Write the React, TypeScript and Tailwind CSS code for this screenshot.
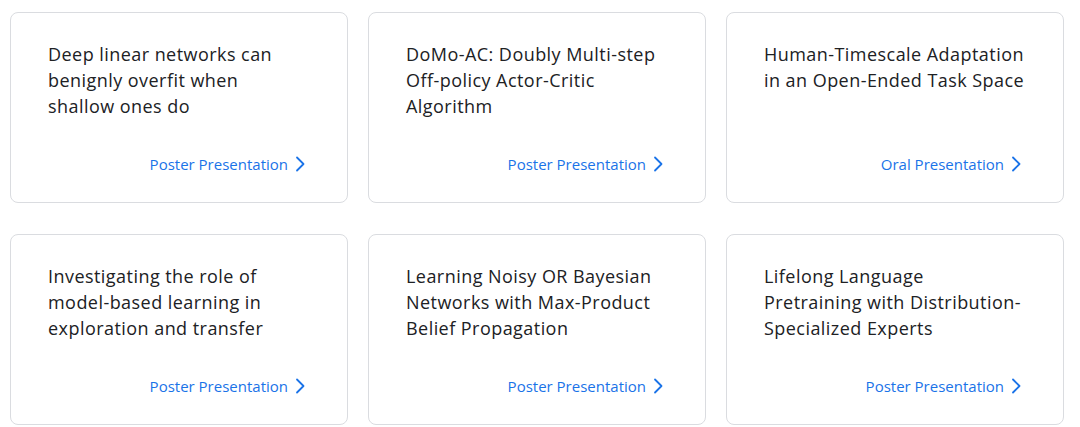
import React from "react";

const cards = [
  { lines: ["Deep linear networks can", "benignly overfit when", "shallow ones do"], link: "Poster Presentation" },
  { lines: ["DoMo-AC: Doubly Multi-step", "Off-policy Actor-Critic", "Algorithm"], link: "Poster Presentation" },
  { lines: ["Human-Timescale Adaptation", "in an Open-Ended Task Space"], link: "Oral Presentation" },
  { lines: ["Investigating the role of", "model-based learning in", "exploration and transfer"], link: "Poster Presentation" },
  { lines: ["Learning Noisy OR Bayesian", "Networks with Max-Product", "Belief Propagation"], link: "Poster Presentation" },
  { lines: ["Lifelong Language", "Pretraining with Distribution-", "Specialized Experts"], link: "Poster Presentation" },
];

function Chevron() {
  return (
    <svg width="10" height="16" viewBox="0 0 10 16" fill="none" className="ml-[7px]">
      <path d="M2 1.5 L8.5 8 L2 14.5" stroke="#1a73e8" strokeWidth="1.8" strokeLinecap="round" strokeLinejoin="round" />
    </svg>
  );
}

export default function App() {
  return (
    <div className="w-[1080px] h-[427px] bg-white pl-[10px] pt-[12px]" style={{ fontFamily: "'Open Sans', Roboto, sans-serif" }}>
      <div className="grid grid-cols-[338px_338px_338px] gap-x-[20px] gap-y-[31px]">
        {cards.map((c, i) => (
          <div key={i} className="h-[191px] border border-[#dadce0] rounded-[8px] flex flex-col pl-[37px] pr-[42px] pt-[28px] pb-[28px]">
            <div className="text-[18px] leading-[26px] tracking-[0.45px] text-[#202124] w-[266px]">
              {c.lines.map((l, j) => (
                <span key={j} className="block whitespace-nowrap">{l}</span>
              ))}
            </div>
            <div className="mt-auto flex items-center justify-end text-[15px] leading-[20px] text-[#1a73e8]">
              <span>{c.link}</span>
              <Chevron />
            </div>
          </div>
        ))}
      </div>
    </div>
  );
}
